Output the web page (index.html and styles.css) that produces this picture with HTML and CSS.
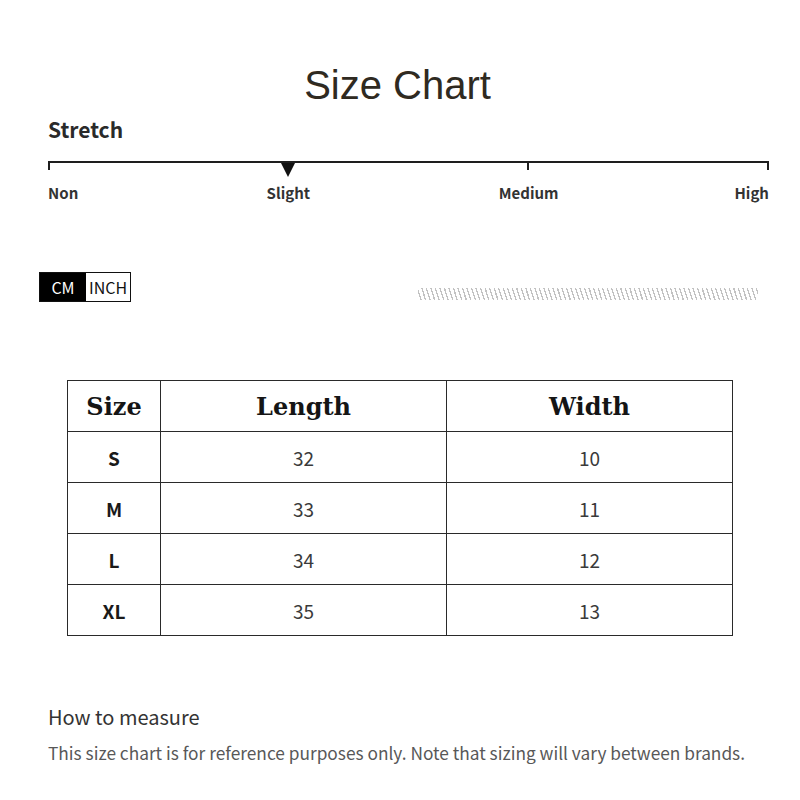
FILE: index.html
```html
<!DOCTYPE html>
<html>
<head>
<meta charset="utf-8">
<link rel="stylesheet" href="styles.css">
</head>
<body>
<div class="page">
  <h1 class="title">Size Chart</h1>
  <section class="stretch">
    <div class="stretch-label">Stretch</div>
    <div class="scale">
      <span class="tick tick-left"></span>
      <span class="tick tick-mid"></span>
      <span class="tick tick-right"></span>
      <span class="marker"></span>
    </div>
    <div class="scale-labels">
      <span class="lbl lbl-non">Non</span>
      <span class="lbl lbl-slight">Slight</span>
      <span class="lbl lbl-medium">Medium</span>
      <span class="lbl lbl-high">High</span>
    </div>
  </section>
  <div class="unit-row">
    <div class="units"><span class="unit unit-on">CM</span><span class="unit">INCH</span></div>
    <div class="hatch"></div>
  </div>
  <table class="chart">
    <thead>
      <tr><th class="c-size">Size</th><th class="c-len">Length</th><th class="c-wid">Width</th></tr>
    </thead>
    <tbody>
      <tr><td class="sz">S</td><td>32</td><td>10</td></tr>
      <tr><td class="sz">M</td><td>33</td><td>11</td></tr>
      <tr><td class="sz">L</td><td>34</td><td>12</td></tr>
      <tr><td class="sz">XL</td><td>35</td><td>13</td></tr>
    </tbody>
  </table>
  <div class="measure">
    <div class="measure-title">How to measure</div>
    <p class="measure-text">This size chart is for reference purposes only. Note that sizing will vary between brands.</p>
  </div>
</div>
</body>
</html>
```

FILE: styles.css
```css
html, body {
  margin: 0;
  padding: 0;
  background: #ffffff;
}
.page {
  width: 800px;
  height: 800px;
  box-sizing: border-box;
  padding-top: 65px;
  display: flex;
  flex-direction: column;
  font-family: "Noto Sans CJK SC", "Open Sans", sans-serif;
  overflow: hidden;
}
.title {
  margin: 0;
  padding-right: 5px;
  text-align: center;
  font-family: "Liberation Sans", Arial, sans-serif;
  font-weight: 400;
  font-size: 40px;
  line-height: 40px;
  color: #2f2a21;
}
.stretch {
  margin: 10px 0 0 48px;
  width: 721px;
}
.stretch-label {
  font-weight: 700;
  font-size: 21px;
  line-height: 28px;
  color: #2a2a2a;
}
.scale {
  position: relative;
  margin-top: 18px;
  height: 0;
  border-top: 2px solid #1e1e1e;
}
.tick {
  position: absolute;
  top: 0;
  width: 2px;
  height: 7px;
  background: #1e1e1e;
}
.tick-left { left: 0; }
.tick-mid { left: 479px; }
.tick-right { right: 0; }
.marker {
  position: absolute;
  top: 0;
  left: 233px;
  width: 0;
  height: 0;
  border-left: 7px solid transparent;
  border-right: 7px solid transparent;
  border-top: 14px solid #111;
}
.scale-labels {
  display: grid;
  grid-template-columns: repeat(6, 1fr);
  margin-top: 20px;
  font-weight: 700;
  font-size: 15px;
  line-height: 20px;
  color: #333;
}
.lbl-non { grid-column: 1; text-align: left; }
.lbl-slight { grid-column: 2 / span 2; text-align: center; }
.lbl-medium { grid-column: 4 / span 2; text-align: center; }
.lbl-high { grid-column: 6; text-align: right; }

.unit-row {
  display: flex;
  align-items: flex-end;
  justify-content: space-between;
  margin: 69px 42px 0 39px;
}
.units {
  display: flex;
  height: 30px;
  border: 1px solid #111;
  box-sizing: border-box;
  font-size: 16px;
  line-height: 28px;
}
.unit {
  width: 44px;
  text-align: center;
  color: #111;
  background: #fff;
}
.unit-on {
  background: #000;
  color: #fff;
  width: 46px;
}
.hatch {
  width: 340px;
  height: 12px;
  margin-bottom: 2px;
  background: repeating-linear-gradient(72deg, #ffffff 0 2.3px, #c2c2c2 2.3px 3.6px, #ffffff 3.6px 4.3px);
}

.chart {
  margin: 78px 0 0 67px;
  width: 666px;
  border-collapse: collapse;
  table-layout: fixed;
}
.chart th, .chart td {
  border: 1.5px solid #2a2a2a;
  text-align: center;
  padding: 0;
  height: 50px;
}
.c-size { width: 92px; }
.c-len { width: 285px; }
.chart th {
  font-family: "DejaVu Serif", serif;
  font-weight: 700;
  font-size: 24px;
  color: #151515;
}
.chart td {
  font-size: 19px;
  color: #3a3a3a;
}
.chart td.sz {
  font-weight: 700;
  font-size: 19px;
  color: #1a1a1a;
}
.measure {
  margin: 69px 0 0 48px;
}
.measure-title {
  font-size: 20px;
  line-height: 24px;
  color: #333;
}
.measure-text {
  margin: 12px 0 0 0;
  font-size: 17.3px;
  line-height: 24px;
  color: #585858;
}
```
